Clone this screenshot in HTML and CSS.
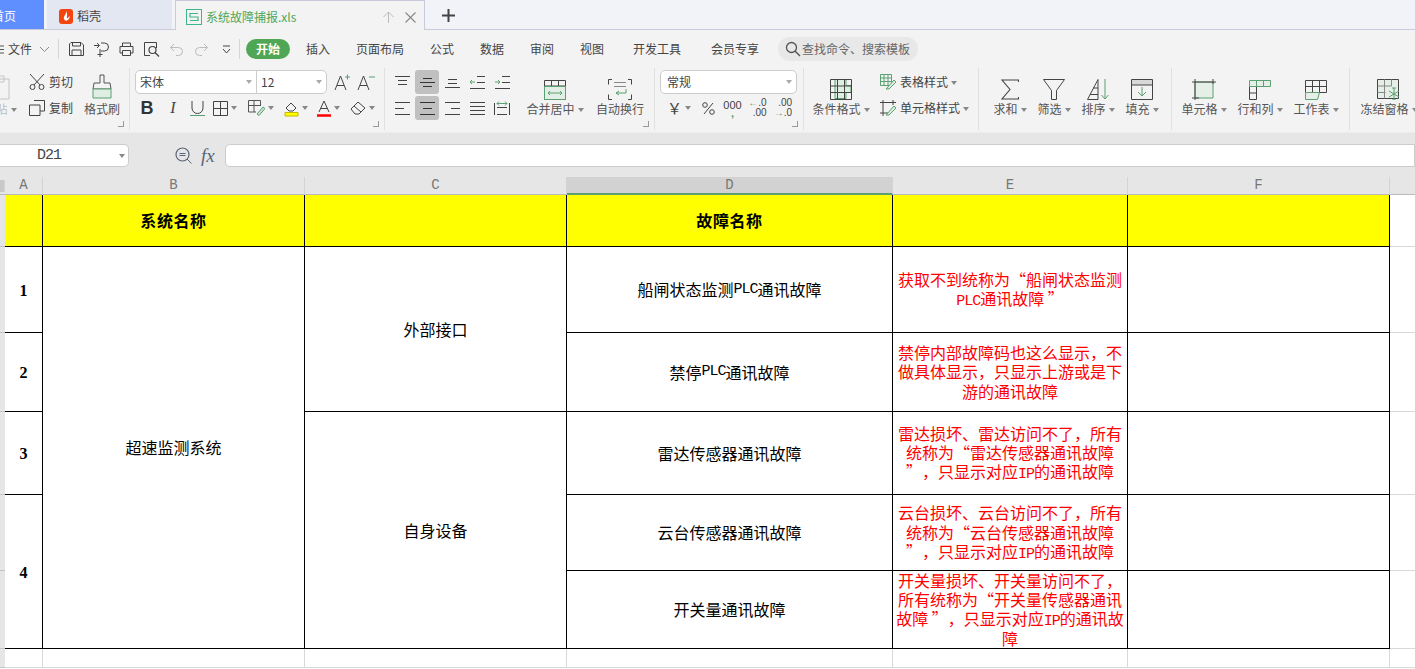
FILE: index.html
```html
<!DOCTYPE html>
<html lang="zh">
<head>
<meta charset="utf-8">
<title>系统故障捕报.xls</title>
<link rel="stylesheet" href="styles.css">
</head>
<body>
<header class="tabs">
  <div class="tab home"><span class="home-text">首页</span></div>
  <div class="tab shell">
    <svg width="14" height="15" viewBox="0 0 14 15"><rect width="14" height="15" rx="3" fill="#f5450f"/><path d="M7 2c1 3-3 5-2 8 .5 1.500 2 2 3 1.500 2-1 3-3 2.500-5-.5 1.500-1.500 2.500-2.500 3C7.500 7.500 9 5 7 2z" fill="#fff"/></svg>
    <span>稻壳</span>
  </div>
  <div class="tab active">
    <svg width="16" height="16" viewBox="0 0 16 16"><rect x=".5" y=".5" width="15" height="15" fill="none" stroke="#3fb58a"/><path d="M12 4.500H4V8h8v3.500H4" fill="none" stroke="#3fb58a" stroke-width="1.200"/></svg>
    <span class="doc">系统故障捕报.xls</span>
    <svg class="up" width="11" height="12" viewBox="0 0 11 12"><path d="M5.500 12V1M.5 6l5-5 5 5" fill="none" stroke="#bbb"/></svg>
    <svg class="x" width="11" height="11" viewBox="0 0 11 11"><path d="M.5.500l10 10M10.500.5l-10 10" fill="none" stroke="#888" stroke-width="1.100"/></svg>
  </div>
  <svg class="plus" width="13" height="13" viewBox="0 0 13 13"><path d="M6.500 0v13M0 6.500h13" stroke="#444" stroke-width="2"/></svg>
</header>

<nav class="menu">
  <div class="qa">
    <svg width="4" height="9" viewBox="0 0 4 9"><path d="M0 1h4M0 4.500h4M0 8h4" stroke="#555"/></svg>
    <span class="qa-file">文件</span>
    <span></span>
    <svg width="9" height="5" viewBox="0 0 9 5"><path d="M0 0l4.500 4.500L9 0" fill="none" stroke="#888"/></svg>
    <span></span>
    <i class="vsep"></i>
    <span></span>
    <svg class="qi" width="15" height="14" viewBox="0 0 15 14"><path d="M.5 2v11.500h14V3l-2.500-2.500H2zM3 13.500V8h9v5.500M3.500.5V4h8V.5" fill="none" stroke="#444"/></svg>
    <svg class="qi" width="15" height="15" viewBox="0 0 15 15"><path d="M0 3.500h5M3 1l2.500 2.500L3 6M7 1h3.500a4 4 0 0 1 0 8H7M6 7v8M3.500 12.500h5" fill="none" stroke="#444"/></svg>
    <svg class="qi" width="15" height="14" viewBox="0 0 15 14"><path d="M3.500 4V1h8v3M3.500 11H1V4.500h13V11h-2.500M3.500 8.500h8v5h-8z" fill="none" stroke="#444"/></svg>
    <svg class="qi" width="16" height="15" viewBox="0 0 16 15"><path d="M6 13.500H.5V.5h12V6" fill="none" stroke="#444"/><circle cx="8.500" cy="8" r="3.500" fill="none" stroke="#444" stroke-width="1.200"/><path d="M11 10.500l4 4" stroke="#444" stroke-width="1.300"/></svg>
    <svg class="qi" width="13" height="13" viewBox="0 0 13 13"><path d="M.5 4.500h8a4 4 0 0 1 0 8H6M.5 4.500L4 1M.5 4.500L4 8" fill="none" stroke="#bbb"/></svg>
    <svg class="qi" width="13" height="13" viewBox="0 0 13 13"><path d="M12.500 4.500h-8a4 4 0 0 0 0 8H7M12.500 4.500L9 1M12.500 4.500L9 8" fill="none" stroke="#bbb"/></svg>
    <svg class="qi" width="9" height="9" viewBox="0 0 9 9"><path d="M1 1h7M1 4l3.500 4L8 4" fill="none" stroke="#444"/></svg>
    <i class="vsep"></i>
    <span></span>
    <span class="pill">开始</span>
  </div>
  <div class="nav">
    <span>插入</span><span>页面布局</span><span>公式</span><span>数据</span><span>审阅</span><span>视图</span><span>开发工具</span><span>会员专享</span>
  </div>
  <div class="search">
    <svg width="16" height="16" viewBox="0 0 16 16"><circle cx="6.500" cy="6.500" r="5" fill="none" stroke="#555" stroke-width="1.300"/><path d="M10 10l5 5" stroke="#555" stroke-width="1.400"/></svg>
    <span>查找命令、搜索模板</span>
  </div>
</nav>

<section class="ribbon">
  <div class="group g1">
    <div class="big paste">
      <svg width="24" height="26" viewBox="0 0 24 26"><path d="M3 5h18v20H3zM8 2h8v6H8z" fill="#f3f3f3" stroke="#c4c4c4"/></svg>
      <span class="lbl dim">粘贴<i class="caret"></i></span>
    </div>
    <div class="rows clip">
      <div class="row"><svg width="16" height="16" viewBox="0 0 16 16"><path d="M1 0l10 11M15 0L5 11" fill="none" stroke="#444"/><circle cx="3.500" cy="13" r="2.500" fill="none" stroke="#444"/><circle cx="12.500" cy="13" r="2.500" fill="none" stroke="#444"/></svg><span>剪切</span></div>
      <div class="row"><svg width="16" height="16" viewBox="0 0 16 16"><path d="M5 .5h10.500V11H11M.5 5h10.500v10.500H.5z" fill="none" stroke="#444"/></svg><span>复制</span></div>
    </div>
    <div class="big brush">
      <svg width="20" height="26" viewBox="0 0 20 26"><path d="M8 1h4v8h6l1 6H1l1-6h6z" fill="#f3f3f3" stroke="#555"/><path d="M1 15h18v9H1z" fill="#dfeee3" stroke="#5aa070"/></svg>
      <span class="lbl">格式刷</span>
    </div>
  </div>

  <div class="group g2">
    <div class="rows">
      <div class="row tight">
        <div class="combo font">
          <span class="combo-a">宋体<i class="caret"></i></span>
          <span class="combo-b">12<i class="caret"></i></span>
        </div>
        <svg class="grow" width="17" height="17" viewBox="0 0 17 17"><path d="M1 16L6.500 2 12 16M3 11.500h7" fill="none" stroke="#444"/><path d="M11 3h5M13.500 .5v5" stroke="#5aa070"/></svg>
        <svg class="shrink" width="18" height="17" viewBox="0 0 18 17"><path d="M1 16L6.500 2 12 16M3 11.500h7" fill="none" stroke="#444"/><path d="M12 3h6" stroke="#5aa070"/></svg>
      </div>
      <div class="row fontbar">
        <b class="bold">B</b>
        <em class="ital">I</em>
        <svg width="15" height="16" viewBox="0 0 15 16"><path d="M2 1v7a5.500 5.500 0 0 0 11 0V1" fill="none" stroke="#444"/><path d="M0 15.500h15" stroke="#5aa070"/></svg>
        <span class="cc"><svg width="15" height="15" viewBox="0 0 15 15"><path d="M.5.500h14v14H.5zM7.500.5v14M.5 7.500h14" fill="none" stroke="#444"/></svg><i class="caret"></i></span>
        <span class="cc"><svg width="17" height="16" viewBox="0 0 17 16"><path d="M.5 12V.5h12V6M.5 5.500h12M6 .5V12M.5 12H8" fill="none" stroke="#555"/><path d="M9 14l6-7 2 1.500-6 7z" fill="#cfe3d5" stroke="#5aa070"/></svg><i class="caret"></i></span>
        <span class="cc"><svg width="15" height="17" viewBox="0 0 15 17"><path d="M2 8l5-5 5 5-3 3H5z" fill="#f3f3f3" stroke="#444"/><path d="M1 12.500h13V16H1z" fill="#ff0" stroke="#c9b800"/></svg><i class="caret"></i></span>
        <span class="cc"><svg width="14" height="17" viewBox="0 0 14 17"><path d="M2 12L7 1l5 11M3.500 8.500h7" fill="none" stroke="#444"/><path d="M0 15.500h14" stroke="#f00" stroke-width="2.500"/></svg><i class="caret"></i></span>
        <span class="cc"><svg width="16" height="14" viewBox="0 0 16 14"><path d="M1 8l7-7 7 6-6 6H5z" fill="none" stroke="#444"/><path d="M4 5l7 6" stroke="#444"/></svg><i class="caret"></i></span>
      </div>
    </div>
  </div>

  <div class="group g3">
    <div class="rows">
      <div class="row cells">
        <span class="cell"><svg width="15" height="12" viewBox="0 0 15 12"><path d="M0 .5h15M3 4.500h9M3 8.500h9" stroke="#444"/></svg></span>
        <span class="cell on"><svg width="15" height="9" viewBox="0 0 15 9"><path d="M3 .5h9M0 4.500h15M3 8.500h9" stroke="#333"/></svg></span>
        <span class="cell"><svg width="15" height="12" viewBox="0 0 15 12"><path d="M3 3.500h9M3 7.500h9M0 11.500h15" stroke="#444"/></svg></span>
        <span class="cell"><svg width="15" height="13" viewBox="0 0 15 13"><path d="M7 .5h8M7 6.500h8M0 12.500h15" stroke="#444"/><path d="M0 6h5M2 4L0 6l2 2" fill="none" stroke="#5aa070"/></svg></span>
        <span class="cell"><svg width="15" height="13" viewBox="0 0 15 13"><path d="M7 .5h8M7 6.500h8M0 12.500h15" stroke="#444"/><path d="M0 6h5M3 4l2 2-2 2" fill="none" stroke="#5aa070"/></svg></span>
      </div>
      <div class="row cells">
        <span class="cell"><svg width="15" height="13" viewBox="0 0 15 13"><path d="M0 .5h15M0 6.500h9M0 12.500h15" stroke="#444"/></svg></span>
        <span class="cell on"><svg width="15" height="13" viewBox="0 0 15 13"><path d="M0 .5h15M3 6.500h9M0 12.500h15" stroke="#333"/></svg></span>
        <span class="cell"><svg width="15" height="13" viewBox="0 0 15 13"><path d="M0 .5h15M6 6.500h9M0 12.500h15" stroke="#444"/></svg></span>
        <span class="cell"><svg width="15" height="13" viewBox="0 0 15 13"><path d="M0 .5h15M0 4.500h15M0 8.500h15M0 12.500h15" stroke="#444"/></svg></span>
        <span class="cell"><svg width="16" height="14" viewBox="0 0 16 14"><path d="M.5 2v12M15.500 2v12M3 6.500h10M3 13.500h10" stroke="#444" fill="none"/><path d="M3 2.500h10M5 .5l-2 2 2 2M11 .5l2 2-2 2" fill="none" stroke="#5aa070"/></svg></span>
      </div>
    </div>
    <div class="big merge">
      <svg width="22" height="26" viewBox="0 0 22 26"><path d="M.5 6.500h21v19H.5zM.5 12h21M7.500 6.500V12M14.500 6.500V12" fill="none" stroke="#444"/><path d="M.5 12.500h21v13H.5z" fill="#e3efe6" stroke="#5aa070"/><path d="M4 19h14M6 17l-2 2 2 2M16 17l2 2-2 2" fill="none" stroke="#5aa070"/></svg>
      <span class="lbl">合并居中<i class="caret"></i></span>
    </div>
    <div class="big wrap">
      <svg width="24" height="26" viewBox="0 0 24 26"><path d="M4 5.500H.5v5M20 5.500h3.500v5M4 25.500H.5v-5M20 25.500h3.500v-5" fill="none" stroke="#444"/><path d="M6 8.500h12M6 12.500h12" stroke="#888"/><path d="M18 15v4H8M11 17l-3 2 3 2" fill="none" stroke="#5aa070"/></svg>
      <span class="lbl">自动换行</span>
    </div>
  </div>

  <div class="group g4">
    <div class="rows">
      <div class="row tight"><div class="combo num"><span class="combo-a">常规<i class="caret"></i></span></div></div>
      <div class="row numbar">
        <span class="cc"><span class="yen">￥</span><i class="caret"></i></span>
        <svg width="13" height="13" viewBox="0 0 13 13"><circle cx="3" cy="3" r="2.300" fill="none" stroke="#444"/><circle cx="10" cy="10" r="2.300" fill="none" stroke="#444"/><path d="M11 1L2 12" stroke="#444"/></svg>
        <span class="thou">000<i>,</i></span>
        <span class="dec"><span><em>←</em>.0</span><span>.00</span></span>
        <span class="dec"><span>.00</span><span><em>→</em>.0</span></span>
      </div>
    </div>
  </div>

  <div class="group g5">
    <div class="big cond">
      <svg width="22" height="26" viewBox="0 0 22 26"><path d="M5 5.500h11v6h5v7h-5v6H5z" fill="#dfeee3" stroke="#5aa070"/><path d="M.5 5.500h21v20H.5zM.5 12h21M.5 18.500h21M7.500 5.500v20M14.500 5.500v20" fill="none" stroke="#444"/></svg>
      <span class="lbl">条件格式<i class="caret"></i></span>
    </div>
    <div class="rows stack">
      <div class="row"><svg width="17" height="16" viewBox="0 0 17 16"><path d="M.5.500h11v11H.5zM.5 4h11M.5 7.500h11M4 .5v11M8 .5v11" fill="none" stroke="#5aa070"/><path d="M7 14l7-8 2 2-7 7H6z" fill="#dfeee3" stroke="#5aa070"/></svg><span>表格样式<i class="caret"></i></span></div>
      <div class="row"><svg width="17" height="16" viewBox="0 0 17 16"><path d="M3 0v16M13 0v5M0 2.500h16M0 13h9" fill="none" stroke="#444"/><path d="M7 14l7-8 2 2-7 7H6z" fill="#dfeee3" stroke="#5aa070"/></svg><span>单元格样式<i class="caret"></i></span></div>
    </div>
  </div>

  <div class="group g6">
    <div class="big t44"><svg width="18" height="26" viewBox="0 0 18 26"><path d="M17.500 8V6H1l8 9.500L1 25h16.500v-2" fill="none" stroke="#444" stroke-width="1.100"/></svg><span class="lbl">求和<i class="caret"></i></span></div>
    <div class="big t44"><svg width="22" height="26" viewBox="0 0 22 26"><path d="M.5 5.500h21l-8 11v9h-5v-9z" fill="none" stroke="#444"/></svg><span class="lbl">筛选<i class="caret"></i></span></div>
    <div class="big t44"><svg width="22" height="26" viewBox="0 0 22 26"><path d="M.5 25.500L11 5.500v20zM3 20.500h8M6 14h5" fill="none" stroke="#444"/><path d="M18 5v20M14.500 21l3.500 4 3.500-4" fill="none" stroke="#5aa070"/></svg><span class="lbl">排序<i class="caret"></i></span></div>
    <div class="big t44"><svg width="22" height="26" viewBox="0 0 22 26"><path d="M1 5h20v6H1z" fill="#d8d8d8"/><path d="M.5 5.500h21v20H.5zM.5 11h21" fill="none" stroke="#444"/><path d="M11 13v9M7 18l4 4 4-4" fill="none" stroke="#5aa070"/></svg><span class="lbl">填充<i class="caret"></i></span></div>
  </div>

  <div class="group g7">
    <div class="big t56"><svg width="24" height="26" viewBox="0 0 24 26"><path d="M3 8h18v16H3z" fill="#e6eee8" stroke="#5aa070"/><path d="M3 5v21M21 5v5M0 8h24M0 24h7" fill="none" stroke="#444"/></svg><span class="lbl">单元格<i class="caret"></i></span></div>
    <div class="big t56"><svg width="22" height="26" viewBox="0 0 22 26"><path d="M.5 12.500h7v13h-7zM.5 19h7" fill="none" stroke="#444"/><path d="M.5 6.500h21v6H.5zM7.500 6.500v6M14.500 6.500v6" fill="#e6eee8" stroke="#5aa070"/></svg><span class="lbl">行和列<i class="caret"></i></span></div>
    <div class="big t56"><svg width="22" height="26" viewBox="0 0 22 26"><path d="M.5 6.500h21v12H.5zM.5 12.500h21M7.500 6.500v12M14.500 6.500v12" fill="none" stroke="#444"/><path d="M.5 18.500h14l-2 7H.5z" fill="#e6eee8" stroke="#5aa070"/></svg><span class="lbl">工作表<i class="caret"></i></span></div>
  </div>

  <div class="group g8">
    <div class="big t56"><svg width="24" height="26" viewBox="0 0 24 26"><path d="M.5 5.500h21v19H.5z" fill="#e6eee8" stroke="#444"/><path d="M.5 12h14M.5 18.500h8M7.500 5.500v19M14.500 5.500V12" stroke="#888" fill="none"/><path d="M17 14v12M12 17l10 6M22 17l-10 6M15 14h4M15 26h4" fill="none" stroke="#5aa070"/></svg><span class="lbl">冻结窗格<i class="caret"></i></span></div>
  </div>
</section>

<section class="formula">
  <div class="namebox"><span>D21</span><i class="caret"></i></div>
  <svg class="zoomi" width="17" height="17" viewBox="0 0 17 17"><circle cx="7.500" cy="7.500" r="6.500" fill="none" stroke="#5a6478" stroke-width="1.200"/><path d="M12 12l4.500 4.500M4.500 6.500h6M4.500 8.500h6" stroke="#5a6478"/></svg>
  <span class="fx">fx</span>
  <div class="finput"></div>
</section>

<div class="colhead">
  <span class="corner"></span>
  <span>A</span><span>B</span><span>C</span><span class="sel">D</span><span>E</span><span>F</span><span class="rest"></span>
</div>

<main class="sheet">
  <div class="rh r1"></div><div class="rh r2"></div><div class="rh r3"></div><div class="rh r4"></div><div class="rh r5"></div><div class="rh r6"></div><div class="rh r7"></div>

  <div class="c hd ca r1"></div>
  <div class="c hd cb r1">系统名称</div>
  <div class="c hd cc2 r1"></div>
  <div class="c hd cd r1">故障名称</div>
  <div class="c hd ce r1"></div>
  <div class="c hd cf r1"></div>

  <div class="c num-c ca r2">1</div>
  <div class="c num-c ca r3">2</div>
  <div class="c num-c ca r4">3</div>
  <div class="c num-c ca r5-6">4</div>
  <div class="c body cb r2-6">超速监测系统</div>
  <div class="c body cc2 r2-3">外部接口</div>
  <div class="c body cc2 r4-6">自身设备</div>

  <div class="c body cd r2">船闸状态监测<span class="lat">PLC</span>通讯故障</div>
  <div class="c body cd r3">禁停<span class="lat">PLC</span>通讯故障</div>
  <div class="c body cd r4">雷达传感器通讯故障</div>
  <div class="c body cd r5">云台传感器通讯故障</div>
  <div class="c body cd r6">开关量通讯故障</div>

  <div class="c note ce r2"><p>获取不到统称为“船闸状态监测<br><span class="lat">PLC</span>通讯故障 ”</p></div>
  <div class="c note ce r3"><p>禁停内部故障码也这么显示，不<br>做具体显示，只显示上游或是下<br>游的通讯故障</p></div>
  <div class="c note ce r4"><p>雷达损坏、雷达访问不了，所有<br>统称为“雷达传感器通讯故障<br>”，只显示对应<span class="lat">IP</span>的通讯故障</p></div>
  <div class="c note ce r5"><p>云台损坏、云台访问不了，所有<br>统称为“云台传感器通讯故障<br>”，只显示对应<span class="lat">IP</span>的通讯故障</p></div>
  <div class="c note ce r6"><p>开关量损坏、开关量访问不了，<br>所有统称为“开关量传感器通讯<br>故障 ”，只显示对应<span class="lat">IP</span>的通讯故<br>障</p></div>

  <div class="c cf r2"></div><div class="c cf r3"></div><div class="c cf r4"></div><div class="c cf r5"></div><div class="c cf r6"></div>

  <div class="g ca r7"></div><div class="g cb r7"></div><div class="g cc2 r7"></div><div class="g cd r7"></div><div class="g ce r7"></div><div class="g cf r7"></div>
  <div class="g cr r1"></div><div class="g cr r2"></div><div class="g cr r3"></div><div class="g cr r4"></div><div class="g cr r5"></div><div class="g cr r6"></div><div class="g cr r7"></div>
</main>
</body>
</html>
```

FILE: styles.css
```css
* { box-sizing: border-box; }
html, body { margin: 0; height: 669px; overflow: hidden; background: #fff; }
body { font: 12px/16px "Noto Sans CJK SC", "Liberation Sans", sans-serif; color: #444; width: 1415px; text-spacing-trim: space-all; }
i, em { font-style: normal; }
p { margin: 0; }

/* tab strip */
.tabs { height: 30px; display: flex; background: #f1f3f8; border-bottom: 1px solid #c9cbdc; }
.tab { height: 29px; display: flex; align-items: center; flex: none; padding-top: 3px; }
.home { width: 44px; background: #5f8eff; overflow: hidden; }
.home-text { color: #fff; margin-left: -8px; white-space: nowrap; }
.shell { width: 125px; margin-left: 3px; background: #e3e7f1; padding-left: 12px; gap: 4px; }
.active { width: 250px; height: 30px; margin-left: 3px; padding-left: 10px; background: #f3f3f3; border: 1px solid #c9cbdc; border-bottom: 0; }
.doc { color: #4fa756; margin-left: 4px; width: 177px; white-space: nowrap; }
.x { margin-left: 11px; }
.plus { margin: 9px 0 0 17px; }

/* menu row */
.menu { height: 38px; background: #f3f3f3; display: flex; align-items: center; }
.qa { display: grid; grid-template-columns: 8px 24px 8px 9px 9px 1px 5px repeat(7, 25px) 1px 6px 44px; align-items: center; flex: none; }
.qa-file { color: #444; }
.qi { justify-self: center; }
.vsep { display: block; width: 1px; height: 20px; background: #d6d6d6; }
.pill { background: #4fa756; color: #fff; font-weight: 700; border-radius: 10px; height: 20px; line-height: 20px; text-align: center; }
.nav { margin-left: 2px; display: grid; grid-template-columns: 52px 72px 52px 48px 52px 48px 82px 74px; text-align: center; color: #444; flex: none; }
.search { margin-left: 6px; width: 140px; height: 24px; border-radius: 12px; background: #e8e8e8; padding-left: 7px; display: flex; align-items: center; gap: 1px; color: #666; flex: none; white-space: nowrap; }

/* ribbon */
.ribbon { height: 64px; background: #f3f3f3; display: flex; }
.group { position: relative; height: 62px; border-right: 1px solid #e0e0e0; display: flex; flex: none; }
.g1 { width: 130px; }
.g2 { width: 255px; padding-left: 5px; }
.g3 { width: 270px; padding-left: 5px; }
.g4 { width: 149px; padding-left: 5px; }
.g5 { width: 175px; padding-left: 7px; }
.g6 { width: 193px; padding-left: 9px; }
.g7 { width: 178px; padding-left: 4px; }
.g8 { flex: 1; padding-left: 11px; border: 0; }
.g1::after, .g2::after, .g3::after, .g4::after {
  content: ""; position: absolute; right: 5px; bottom: 3px; width: 5px; height: 5px;
  border-right: 1px solid #999; border-bottom: 1px solid #999;
}
.big { display: flex; flex-direction: column; align-items: center; padding-top: 6px; flex: none; }
.lbl { display: block; line-height: 16px; margin-top: 1px; white-space: nowrap; color: #555; }
.dim { color: #bbb; }
.paste { width: 36px; margin-left: -18px; }
.brush { width: 40px; }
.merge { width: 58px; margin-left: 12px; }
.wrap { width: 58px; margin-left: 7px; }
.cond { width: 60px; }
.t44 { width: 44px; }
.t56 { width: 56px; }
.caret { display: inline-block; width: 0; height: 0; margin-left: 3px; vertical-align: 2px; border: 3px solid transparent; border-top: 4px solid #888; border-bottom: 0; }

.rows { padding-top: 2px; display: flex; flex-direction: column; gap: 2px; flex: none; }
.row { height: 24px; display: flex; align-items: center; white-space: nowrap; }
.clip { width: 53px; margin-left: 11px; }
.clip .row { gap: 4px; }
.stack { margin-left: 9px; }
.stack .row { gap: 3px; }

.combo { height: 24px; background: #fff; border: 1px solid #ccc; border-radius: 5px; display: flex; align-items: center; color: #444; }
.font { width: 192px; }
.num { width: 137px; }
.combo-a, .combo-b { height: 22px; display: flex; align-items: center; justify-content: space-between; padding: 0 4px; }
.font .combo-a { width: 121px; border-right: 1px solid #ccc; }
.font .combo-b { width: 69px; }
.num .combo-a { width: 100%; padding-left: 6px; }
.combo .caret { border-top-color: #aaa; }
.tight { justify-content: flex-start; }
.grow { margin-left: 7px; }
.shrink { margin-left: 6px; }

.fontbar { display: grid; grid-template-columns: 24px 28px 21px 34px 37px 33px 32px 37px; justify-items: center; }
.bold { font: 700 18px/24px "Liberation Sans", sans-serif; color: #333; }
.ital { font: italic 16px/24px "Liberation Serif", serif; color: #444; }
.cc { display: flex; align-items: center; }
.cells { gap: 1px; }
.cell { width: 24px; height: 24px; display: flex; align-items: center; justify-content: center; border-radius: 3px; }
.on { background: #c0c0c0; }

.numbar { display: grid; grid-template-columns: 38px 21px 27px 23px 28px; justify-items: center; color: #444; }
.yen { font-size: 15px; }
.thou { font: 11px/10px "Liberation Sans", sans-serif; text-align: center; }
.thou i { display: block; color: #5aa070; font-weight: 700; line-height: 6px; }
.dec { display: flex; flex-direction: column; font: 10px/10px "Liberation Sans", sans-serif; text-align: right; }
.dec em { color: #5aa070; }

/* formula bar */
.formula { height: 45px; background: #e6e6e6; display: flex; align-items: flex-start; padding-top: 11px; border-top: 1px solid #ededed; }
.namebox { width: 129px; height: 23px; background: #fff; border: 1px solid #ccc; border-left: 0; border-radius: 0 5px 5px 0; display: flex; align-items: center; justify-content: space-between; padding: 0 3px 0 37px; }
.namebox span { font: 15px/21px "Liberation Mono", monospace; letter-spacing: -1px; color: #444; }
.zoomi { margin: 3px 0 0 46px; }
.fx { font: italic 19px/23px "Liberation Serif", serif; color: #5a6478; margin-left: 9px; width: 24px; }
.finput { flex: 1; height: 23px; background: #fff; border: 1px solid #ccc; border-radius: 5px 0 0 5px; }

/* column heads */
.colhead { height: 18px; display: grid; grid-template-columns: 5px 38px 262px 262px 326px 235px 262px 1fr; background: #e6e6e6; border-bottom: 1px solid #bbb; }
.colhead span { font: 14px/17px "Liberation Mono", monospace; color: #777; text-align: center; border-right: 1px solid #d4d4d4; }
.colhead .corner { background: #c8c8c8; margin: 3px 0; }
.colhead .sel { background: #d2d2d2; border-bottom: 2px solid #5aa070; height: 18px; }
.colhead .rest { border: 0; }

/* sheet */
.sheet { display: grid; height: 474px; grid-template-columns: 5px 38px 262px 262px 326px 235px 262px 1fr; grid-template-rows: 52px 86px 79px 83px 76px 78px 19px 1fr; font-size: 16px; line-height: 20px; color: #000; }
.rh { grid-column: 1; background: #e6e6e6; border-bottom: 1px solid #c4c4c4; }
.c { display: flex; align-items: center; justify-content: center; text-align: center; background: #fff; border-right: 1px solid #000; border-bottom: 1px solid #000; white-space: nowrap; }
.g { background: #fff; border-right: 1px solid #d8d8d8; border-bottom: 1px solid #d8d8d8; }
.hd { background: #ff0; font-weight: 700; letter-spacing: .6px; padding-bottom: 2px; }
.body { padding-bottom: 1px; }
.num-c { font-weight: 700; font-family: "Liberation Serif", serif; padding-top: 2px; }
.ca { grid-column: 2; } .cb { grid-column: 3; } .cc2 { grid-column: 4; } .cd { grid-column: 5; } .ce { grid-column: 6; } .cf { grid-column: 7; } .cr { grid-column: 8; border-right: 0; }
.r1 { grid-row: 1; } .r2 { grid-row: 2; } .r3 { grid-row: 3; } .r4 { grid-row: 4; } .r5 { grid-row: 5; } .r6 { grid-row: 6; } .r7 { grid-row: 7; }
.r5-6 { grid-row: 5 / 7; } .r2-6 { grid-row: 2 / 7; } .r2-3 { grid-row: 2 / 4; } .r4-6 { grid-row: 4 / 7; }
.note { color: #f00; line-height: 19.250px; overflow: hidden; }
.lat { font: 15px/1 "Liberation Mono", monospace; letter-spacing: -1px; }
```
